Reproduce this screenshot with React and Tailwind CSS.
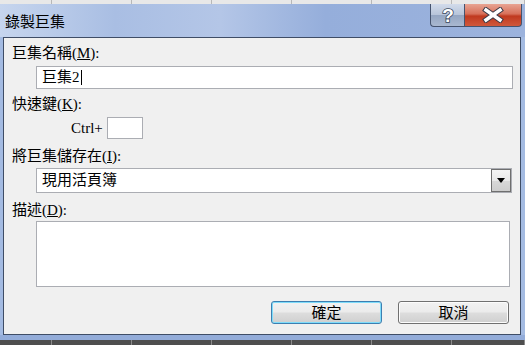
import React from "react";

const cjk = "font-['Liberation_Serif','Noto_Sans_CJK_TC',serif]";

const Label = ({ text, hotkey, className = "" }) => (
  <div className={`h-[17px] leading-[17px] text-[15px] text-black pl-[8px] ${className}`}>
    {text}(<u>{hotkey}</u>):
  </div>
);

const Button = ({ children, primary }) => (
  <button
    type="button"
    className={`w-[111px] h-[23px] rounded-[3px] border text-[15px] leading-[20px] text-black bg-[linear-gradient(180deg,#f2f2f2_0%,#ebebeb_48%,#dddddd_52%,#cfcfcf_100%)] ${
      primary
        ? "border-[#3c7fb1] shadow-[inset_0_0_0_1px_#7fdcfa]"
        : "border-[#707070] shadow-[inset_0_0_0_1px_#fcfcfc]"
    }`}
  >
    {children}
  </button>
);

const App = () => {
  const cols = [52, 80, 80, 80, 80, 80, 73];

  return (
    <div className={`w-[525px] h-[345px] flex flex-col overflow-hidden bg-[#a4bbe2] ${cjk}`}>
      {/* sheet behind the dialog */}
      <div className="h-[4px] flex bg-[#e8e8e8]">
        {cols.map((w, i) => (
          <div key={i} style={{ width: w }} className="h-full border-r border-[#b8b8b8]" />
        ))}
      </div>

      {/* title bar */}
      <div className="h-[33px] flex items-start justify-between bg-[linear-gradient(90deg,#c6d5ee_0%,#a9bee3_22%,#b4c6e7_42%,#95aedb_62%,#9cb3dd_100%)]">
        <span className="pl-[5px] pt-[8px] text-[15px] leading-[18px] text-black font-['Noto_Sans_CJK_TC',sans-serif]">
          錄製巨集
        </span>
        <div className="flex mr-[3px]">
          <div className="w-[34px] h-[23px] flex items-center justify-center rounded-bl-[4px] border border-t-0 border-r-0 border-[#45536e] bg-[linear-gradient(180deg,#d2dbea_0%,#b8c5da_48%,#95a6c2_52%,#a9b8d0_100%)]">
            <svg width="16" height="20" viewBox="0 0 16 20">
              <text
                x="8"
                y="17"
                textAnchor="middle"
                fontSize="19"
                fontWeight="bold"
                fontFamily="Liberation Sans, sans-serif"
                fill="#ffffff"
                stroke="#3a465e"
                strokeWidth="1.6"
                paintOrder="stroke"
              >
                ?
              </text>
            </svg>
          </div>
          <div className="w-[58px] h-[23px] flex items-center justify-center rounded-br-[4px] border border-t-0 border-[#45536e] bg-[linear-gradient(180deg,#e8a493_0%,#d7705a_45%,#c0391f_55%,#d0583c_100%)]">
            <svg width="24" height="16" viewBox="0 0 24 16">
              <path d="M5 3 L19 13 M19 3 L5 13" stroke="#3a3a48" strokeWidth="5.5" strokeLinecap="square" />
              <path d="M5 3 L19 13 M19 3 L5 13" stroke="#ffffff" strokeWidth="3.5" strokeLinecap="square" />
            </svg>
          </div>
        </div>
      </div>

      {/* client area */}
      <div className="flex-1 flex pl-[3px] pr-[4px]">
        <div className="flex-1 flex flex-col border border-[#3f4d66] bg-[#f0f0f0]">
          <Label text="巨集名稱" hotkey="M" className="mt-[7px]" />
          <div className="mt-[4px] ml-[32px] mr-[7px] h-[23px] flex items-center border border-[#abadb3] bg-white pl-[5px] text-[15px] text-black">
            <span>巨集2</span>
            <span className="ml-[1px] w-[1px] h-[15px] bg-black" />
          </div>

          <Label text="快速鍵" hotkey="K" className="mt-[7px]" />
          <div className="mt-[4px] flex items-center h-[22px]">
            <span className="ml-[67px] w-[36px] text-[15px] text-black">Ctrl+</span>
            <div className="w-[36px] h-[22px] border border-[#abadb3] bg-white" />
          </div>

          <Label text="將巨集儲存在" hotkey="I" className="mt-[9px]" />
          <div className="mt-[3px] ml-[32px] mr-[8px] h-[25px] flex items-center border border-[#abadb3] bg-white text-[15px] text-black">
            <span className="flex-1 pl-[5px]">現用活頁簿</span>
            <div className="w-[20px] h-[23px] flex items-center justify-center border border-[#6f6f6f] bg-[linear-gradient(180deg,#f4f4f4_0%,#e9e9e9_50%,#d8d8d8_51%,#cdcdcd_100%)]">
              <svg width="8" height="5" viewBox="0 0 8 5">
                <path d="M0 0 H8 L4 5 Z" fill="#000" />
              </svg>
            </div>
          </div>

          <Label text="描述" hotkey="D" className="mt-[9px]" />
          <div className="mt-[2px] ml-[32px] mr-[10px] h-[66px] border border-[#abadb3] bg-white" />

          <div className="mt-[14px] flex justify-end gap-[16px] mr-[11px]">
            <Button primary>確定</Button>
            <Button>取消</Button>
          </div>
        </div>
      </div>

      <div className="h-[5px] bg-[#93acd9]" />
      <div className="h-[5px] flex bg-[#4e4e4e]">
        {cols.map((w, i) => (
          <div key={i} style={{ width: w }} className="h-full border-r border-[#8a8a8a]" />
        ))}
      </div>
    </div>
  );
};

export default App;
